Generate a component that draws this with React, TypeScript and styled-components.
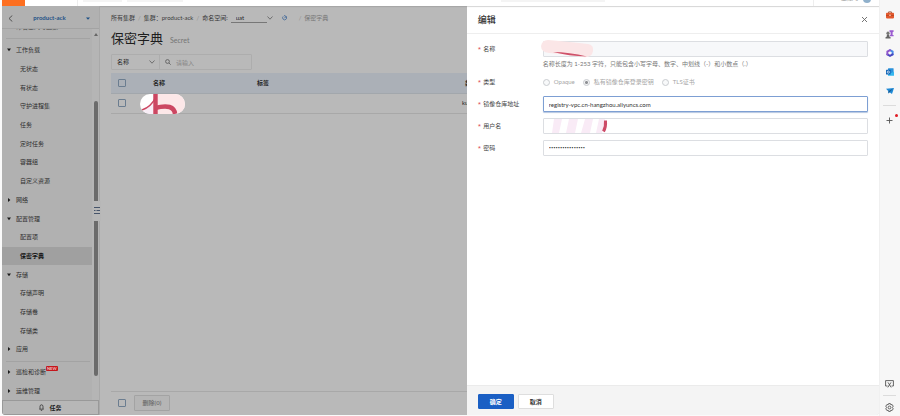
import React, { useState } from "react";
import styled, { createGlobalStyle, css } from "styled-components";

const GlobalStyle = createGlobalStyle`
  * { box-sizing: border-box; }
  html, body { margin: 0; height: 100%; }
  body {
    background: #f7f7f7;
    overflow: hidden;
    font-family: Lato, "Noto Sans CJK SC", sans-serif;
    font-size: 6px;
    line-height: 8px;
    color: #333;
  }
  #root { height: 100%; }
  button, input, select { font: inherit; color: inherit; }
`;

const Window = styled.div`
  display: flex;
  height: 100vh;
  padding-left: 2px;
  background: #fafafa;
`;

const Page = styled.div`
  position: relative;
  flex: 1;
  min-width: 0;
  display: flex;
  flex-direction: column;
  margin-bottom: 1px;
  border-radius: 0 0 4px 4px;
  overflow: hidden;
  background: #fff;
`;

/* ---------- top bar ---------- */

const TopBar = styled.header`
  flex: none;
  height: 6px;
  display: flex;
  align-items: flex-start;
  overflow: hidden;
  background: #fff;
`;

const Brand = styled.div`
  width: 23px;
  height: 6px;
  background: #fd6f20;
`;

const TopDivider = styled.div<{ $before: number }>`
  width: 1px;
  height: 6px;
  margin-left: ${(p) => p.$before}px;
  background: #eee;
`;

const TopField = styled.div<{ $width: number; $before: number }>`
  width: ${(p) => p.$width}px;
  height: 2px;
  margin-left: ${(p) => p.$before}px;
  background: #f4f4f4;
`;

const Account = styled.div`
  display: flex;
  align-items: flex-end;
  gap: 4px;
  height: 2px;
  margin: 0 8px 0 27px;
  color: #999;
`;

const Avatar = styled.span`
  width: 8px;
  height: 8px;
  margin-bottom: -1px;
  border-radius: 50%;
  background: #8fb0cb;
`;

const Spring = styled.div`
  flex: 1;
`;

/* ---------- console ---------- */

const Console = styled.div`
  position: relative;
  flex: 1;
  min-height: 0;
  display: flex;
  background: #b9b9b9;
  box-shadow: inset 0 2px 1px -1px #a6a6a6;
`;

const Sidebar = styled.aside`
  flex: none;
  width: 98px;
  display: flex;
  flex-direction: column;
  background: #b1b1b1;
  border-right: 1px solid #a9a9a9;
`;

const ClusterBar = styled.div`
  flex: none;
  height: 23px;
  display: flex;
  align-items: center;
  justify-content: space-between;
  padding: 2px 9px 0 6px;
  border-bottom: 1px solid #a3a3a3;
`;

const PlainButton = styled.button`
  display: inline-flex;
  align-items: center;
  justify-content: center;
  padding: 0;
  border: 0;
  background: none;
  cursor: pointer;
`;

const ClusterName = styled.strong`
  color: #1d5086;
  font-weight: 700;
`;

const MenuArea = styled.div`
  flex: 1;
  min-height: 0;
  display: flex;
`;

const Menu = styled.nav`
  flex: 1;
  min-width: 0;
  display: flex;
  flex-direction: column;
`;

const CutRow = styled.div`
  flex: none;
  display: flex;
  align-items: flex-end;
  height: 9px;
  overflow: hidden;
  padding: 0 0 7px 14px;
  color: #444;
`;

const MenuRule = styled.hr`
  flex: none;
  width: 84px;
  height: 1px;
  margin: 0 0 0 4px;
  border: 0;
  background: #a3a3a3;
`;

const MenuGroup = styled.div<{ $rows: number; $top: number; $end?: number }>`
  flex: ${(p) => p.$rows} 1 0;
  display: flex;
  flex-direction: column;
  padding: ${(p) => p.$top}px 0 ${(p) => p.$end ?? 0}px;
`;

const MenuItem = styled.a<{ $child?: boolean; $active?: boolean }>`
  flex: 1 1 0;
  display: flex;
  align-items: center;
  padding-left: ${(p) => (p.$child ? 18 : 5)}px;
  gap: 5px;
  color: #2c2c2c;
  text-decoration: none;
  ${(p) =>
    p.$active &&
    css`
      background: #a0a0a0;
      color: #151515;
      font-weight: 700;
    `}
`;

const NewTag = styled.span`
  align-self: flex-start;
  margin: 3px 0 0 -5px;
  padding: 0 1px;
  height: 5px;
  border-radius: 1px;
  background: #c4161c;
  color: #f1c9ca;
  font-size: 4px;
  line-height: 5px;
  font-weight: 700;
`;

const Track = styled.div`
  flex: none;
  width: 7px;
  display: flex;
  flex-direction: column;
  align-items: center;
  padding: 4px 0 24px;
  background: #b5b5b5;
`;

const Thumb = styled.div<{ $grow: number; $end: "top" | "bottom"; $before?: number }>`
  flex: ${(p) => p.$grow} 1 0;
  width: 4px;
  margin-top: ${(p) => p.$before ?? 0}px;
  border-radius: ${(p) => (p.$end === "top" ? "2px 2px 0 0" : "0 0 2px 2px")};
  background: #6b6b6b;
`;

const Collapse = styled(PlainButton)`
  width: 8px;
  height: 20px;
  margin-left: 3px;
  background: #b7b7b7;
  z-index: 1;
`;

const TaskButton = styled(PlainButton)`
  flex: none;
  height: 15px;
  gap: 5px;
  border: 1px solid #999;
  background: #b7b7b7;
  color: #222;
  font-weight: 700;
`;

/* ---------- secret list ---------- */

const Main = styled.main`
  flex: 1;
  min-width: 0;
  display: flex;
  flex-direction: column;
  padding: 7px 0 0 11px;
`;

const Crumbs = styled.nav`
  flex: none;
  display: flex;
  align-items: center;
  gap: 3px;
  height: 10px;
  white-space: nowrap;
`;

const Crumb = styled.a<{ $muted?: boolean }>`
  color: ${(p) => (p.$muted ? "#777" : "#3a3a3a")};
  text-decoration: none;
`;

const Slash = styled.span`
  color: #8d8d8d;
`;

const SelectWrap = styled.span`
  display: inline-flex;
  align-items: center;
`;

const BareSelect = styled.select<{ $width: number; $underline?: boolean }>`
  appearance: none;
  width: ${(p) => p.$width}px;
  height: ${(p) => (p.$underline ? 10 : 13)}px;
  padding: 0 0 0 5px;
  border: 0;
  border-bottom: ${(p) => (p.$underline ? "1px solid #777" : "0")};
  border-radius: 0;
  background: none;
  color: #262626;
  outline: none;
`;

const Heading = styled.div`
  flex: none;
  display: flex;
  align-items: baseline;
  gap: 7px;
  margin-top: 5px;
  height: 20px;
`;

const Title = styled.h1`
  margin: 0;
  font-size: 13px;
  line-height: 20px;
  font-weight: 400;
  color: #1d1d1d;
`;

const Subtitle = styled.span`
  font-size: 7px;
  color: #747474;
`;

const Filter = styled.div`
  flex: none;
  display: flex;
  align-items: center;
  width: 141px;
  height: 16px;
  margin-top: 6px;
  border: 1px solid #adadad;
  border-radius: 1px;
`;

const FilterKind = styled.div`
  display: flex;
  align-items: center;
  width: 48px;
  height: 14px;
  border-right: 1px solid #adadad;
`;

const SearchBox = styled.label`
  flex: 1;
  min-width: 0;
  display: flex;
  align-items: center;
  gap: 5px;
  padding-left: 5px;
`;

const SearchInput = styled.input`
  flex: 1;
  min-width: 0;
  height: 12px;
  padding: 0;
  border: 0;
  background: none;
  outline: none;
  &::placeholder { color: #868686; opacity: 1; }
`;

const Table = styled.table`
  flex: none;
  width: 100%;
  margin-top: 3px;
  border-collapse: collapse;
  table-layout: fixed;
  text-align: left;
`;

const HeadCell = styled.th<{ $width?: number; $indent?: number }>`
  width: ${(p) => (p.$width ? `${p.$width}px` : "auto")};
  height: 20px;
  padding: 0 0 0 ${(p) => p.$indent ?? 0}px;
  background: #abb0b7;
  border-bottom: 1px solid #a2a7ac;
  color: #262626;
  font-weight: 700;
`;

const Cell = styled.td`
  height: 20px;
  padding: 0;
  border-bottom: 1px solid #a8a8a8;
  line-height: 0;
  color: #222;
`;

const CheckBox = styled.input`
  appearance: none;
  display: block;
  width: 8px;
  height: 8px;
  margin: 0 0 0 7px;
  border: 1px solid #6b7d90;
  border-radius: 1px;
`;

const BulkBar = styled.div`
  flex: none;
  display: flex;
  align-items: center;
  gap: 8px;
  height: 24px;
  margin-top: auto;
  padding-bottom: 1px;
  border-top: 1px solid #a8a8a8;
`;

const DeleteButton = styled.button`
  width: 36px;
  height: 16px;
  padding: 0;
  border: 1px solid #a3a3a3;
  border-radius: 1px;
  background: #b5b5b5;
  color: #757575;
  font-weight: 700;
`;

/* ---------- edit drawer ---------- */

const Drawer = styled.section`
  position: absolute;
  top: 0;
  right: 0;
  bottom: 0;
  width: 47%;
  display: flex;
  flex-direction: column;
  background: #fff;
  box-shadow: inset 0 2px 1px -1px #d5d5d5;
`;

const DrawerHead = styled.header`
  flex: none;
  height: 28px;
  display: flex;
  align-items: center;
  justify-content: space-between;
  padding: 0 11px;
  border-bottom: 1px solid #eee;
`;

const DrawerTitle = styled.h2`
  margin: 0;
  font-size: 9px;
  line-height: 12px;
  font-weight: 500;
  color: #333;
`;

const Form = styled.form`
  flex: 1;
  display: flex;
  flex-direction: column;
  gap: 6px;
  padding: 7px 11px 0;
`;

const Field = styled.div`
  display: grid;
  grid-template-columns: 65px 1fr;
  min-height: 16px;
`;

const Label = styled.label`
  line-height: 16px;
  color: #444;
  &::before {
    content: "*";
    margin-right: 2px;
    color: #d9363e;
    font-family: "Open Sans", sans-serif;
  }
`;

const InputHolder = styled.div`
  position: relative;
`;

const TextInput = styled.input`
  display: block;
  width: 100%;
  height: 16px;
  padding: 0 5px;
  border: 1px solid #dcdee2;
  border-radius: 1px;
  background: #fff;
  color: #333;
  outline: none;
  &:disabled { background: #f7f8fa; }
  &[type="password"] { font-family: "Open Sans", sans-serif; }
  &[data-current="true"] {
    border-color: #7d9fd3;
    box-shadow: 0 1px 1px #b5c6e0;
  }
`;

const Hint = styled.p`
  margin: 2px 0 0;
  line-height: 9px;
  color: #777;
`;

const RadioRow = styled.div`
  display: flex;
  align-items: center;
  gap: 8px;
  height: 16px;
`;

const RadioLabel = styled.label`
  display: inline-flex;
  align-items: center;
  gap: 4px;
  color: #a5a5a5;
`;

const Radio = styled.input`
  appearance: none;
  width: 7px;
  height: 7px;
  margin: 0;
  border: 1px solid #c9ccd0;
  border-radius: 50%;
  background: #f8f9fa;
  &:checked {
    background: radial-gradient(circle, #8e9094 0 1px, #f3f4f5 2px);
  }
`;

const DrawerFoot = styled.footer`
  flex: none;
  display: flex;
  gap: 4px;
  height: 30px;
  padding: 8px 0 0 11px;
  border-top: 1px solid #ebebeb;
  background: #f4f4f4;
`;

const ActionButton = styled.button<{ $primary?: boolean }>`
  width: 36px;
  height: 15px;
  padding: 0;
  border: 1px solid ${(p) => (p.$primary ? "#1a5fc4" : "#dedede")};
  border-radius: 1px;
  background: ${(p) => (p.$primary ? "#1a5fc4" : "#fff")};
  color: ${(p) => (p.$primary ? "#fff" : "#333")};
  font-weight: 700;
`;

const NameMask = styled.svg`
  position: absolute;
  left: -2px;
  top: -2px;
`;

const UserMask = styled.svg`
  position: absolute;
  left: 9px;
  top: 1px;
`;

/* ---------- browser side rail ---------- */

const Rail = styled.aside`
  flex: none;
  width: 21px;
  display: flex;
  flex-direction: column;
  align-items: center;
  gap: 9px;
  padding: 10px 1px 4px 0;
  background: #f7f7f7;
  border-left: 1px solid #f0f0f0;
`;

const RailButton = styled(PlainButton)`
  position: relative;
  flex: none;
  width: 18px;
  height: 10px;
`;

const RailRule = styled.hr`
  flex: none;
  width: 13px;
  height: 1px;
  margin: 0;
  border: 0;
  background: #dcdcdc;
`;

const RailEnd = styled.div`
  display: flex;
  flex-direction: column;
  align-items: center;
  gap: 6px;
  margin-top: auto;
`;

const Dot = styled.span`
  position: absolute;
  top: -1px;
  right: 1px;
  width: 3px;
  height: 3px;
  border-radius: 50%;
  background: #e01b24;
`;

const Chevron = ({ color = "#5c5c5c" }: { color?: string }) => (
  <svg width="6" height="4" viewBox="0 0 6 4" fill="none" stroke={color} strokeWidth="0.8">
    <path d="M0.5 0.5 3 3.2 5.5 0.5" />
  </svg>
);

const Caret = ({ open }: { open?: boolean }) => (
  <svg width="4" height="4" viewBox="0 0 4 4" fill="#1c1c1c">
    <path d={open ? "M0 0.5H4L2 3.2Z" : "M1 0V4L3.4 2Z"} />
  </svg>
);

type Item = { text: string; open?: boolean; child?: boolean; active?: boolean };

const items: Item[] = [
  { text: "工作负载", open: true },
  { text: "无状态", child: true },
  { text: "有状态", child: true },
  { text: "守护进程集", child: true },
  { text: "任务", child: true },
  { text: "定时任务", child: true },
  { text: "容器组", child: true },
  { text: "自定义资源", child: true },
  { text: "网络" },
  { text: "配置管理", open: true },
  { text: "配置项", child: true },
  { text: "保密字典", child: true, active: true },
  { text: "存储", open: true },
  { text: "存储声明", child: true },
  { text: "存储卷", child: true },
  { text: "存储类", child: true },
  { text: "应用" },
];

const types = ["Opaque", "私有镜像仓库登录密钥", "TLS证书"];

function SideMenu() {
  return (
    <Sidebar>
      <ClusterBar>
        <PlainButton aria-label="返回">
          <svg width="5" height="7" viewBox="0 0 5 7" fill="none" stroke="#4b4b4b" strokeWidth="0.9">
            <path d="M4.3 0.5 1 3.5 4.3 6.5" />
          </svg>
        </PlainButton>
        <ClusterName>product-ack</ClusterName>
        <PlainButton aria-label="切换集群">
          <svg width="4" height="3" viewBox="0 0 4 3" fill="#1d5086">
            <path d="M0 0.5H4L2 2.7Z" />
          </svg>
        </PlainButton>
      </ClusterBar>
      <MenuArea>
        <Menu>
          <CutRow>命名空间与配额</CutRow>
          <MenuRule />
          <MenuGroup $rows={17} $top={2} $end={2}>
            {items.map((i) => (
              <MenuItem key={i.text} href="#" $child={i.child} $active={i.active}>
                {!i.child && <Caret open={i.open} />}
                {i.text}
              </MenuItem>
            ))}
          </MenuGroup>
          <MenuRule />
          <MenuGroup $rows={2} $top={1}>
            <MenuItem href="#">
              <Caret />
              巡检和诊断
              <NewTag>NEW</NewTag>
            </MenuItem>
            <MenuItem href="#">
              <Caret />
              运维管理
            </MenuItem>
          </MenuGroup>
        </Menu>
        <Track>
          <svg width="4" height="3" viewBox="0 0 4 3" fill="#666">
            <path d="M0 3H4L2 0Z" />
          </svg>
          <Thumb $grow={100} $end="top" $before={65} />
          <Collapse aria-label="收起菜单">
            <svg width="6" height="7" viewBox="0 0 6 7" stroke="#46546a" strokeWidth="1" fill="none">
              <path d="M0 0.5H6M2.5 3.5H6M0 6.5H6M0 3.5H1.5" />
            </svg>
          </Collapse>
          <Thumb $grow={156} $end="bottom" />
        </Track>
      </MenuArea>
      <TaskButton>
        <svg width="5" height="7" viewBox="0 0 5 7" fill="none" stroke="#222" strokeWidth="0.7">
          <path d="M0.3 5.2H4.7M1 5V2.6Q1 0.8 2.5 0.8T4 2.6V5M1.8 6.4H3.2" />
        </svg>
        任务
      </TaskButton>
    </Sidebar>
  );
}

function SecretList() {
  return (
    <Main>
      <Crumbs>
        <Crumb href="#">所有集群</Crumb>
        <Slash>/</Slash>
        <Crumb href="#">集群：product-ack</Crumb>
        <Slash>/</Slash>
        <span>命名空间:</span>
        <SelectWrap>
          <BareSelect aria-label="命名空间" $width={36} $underline>
            <option>uat</option>
          </BareSelect>
          <Chevron />
        </SelectWrap>
        <PlainButton aria-label="刷新">
          <svg width="20" height="6" viewBox="0 0 20 6" fill="none" stroke="#3d6698" strokeWidth="0.8">
            <path d="M10.2 1.6A2 2 0 1 1 7.2 1.4M8 0.4 10.4 1.6 8.4 2.8" />
          </svg>
        </PlainButton>
        <Slash>/</Slash>
        <Crumb as="span" $muted>保密字典</Crumb>
      </Crumbs>
      <Heading>
        <Title>保密字典</Title>
        <Subtitle>Secret</Subtitle>
      </Heading>
      <Filter>
        <FilterKind>
          <BareSelect aria-label="筛选字段" $width={37}>
            <option>名称</option>
          </BareSelect>
          <Chevron />
        </FilterKind>
        <SearchBox>
          <svg width="6" height="6" viewBox="0 0 6 6" fill="none" stroke="#555" strokeWidth="0.8">
            <circle cx="2.5" cy="2.5" r="1.9" />
            <path d="M4 4 5.7 5.7" />
          </svg>
          <SearchInput placeholder="请输入" aria-label="搜索" />
        </SearchBox>
      </Filter>
      <Table>
        <thead>
          <tr>
            <HeadCell $width={42}><CheckBox type="checkbox" aria-label="全选" /></HeadCell>
            <HeadCell $width={104}>名称</HeadCell>
            <HeadCell $width={205}>标签</HeadCell>
            <HeadCell $indent={3}>类型</HeadCell>
          </tr>
        </thead>
        <tbody>
          <tr>
            <Cell><CheckBox type="checkbox" aria-label="选择" /></Cell>
            <Cell>
              <Smudge />
            </Cell>
            <Cell />
            <Cell>kube</Cell>
          </tr>
        </tbody>
      </Table>
      <BulkBar>
        <CheckBox type="checkbox" aria-label="选择全部" />
        <DeleteButton disabled>删除(0)</DeleteButton>
      </BulkBar>
    </Main>
  );
}

const SmudgeSvg = styled.svg`
  display: block;
  margin: 0 0 -1px -13px;
`;

const Smudge = () => (
  <SmudgeSvg width="45" height="20" viewBox="0 0 45 20">
    <defs>
      <clipPath id="pill"><rect width="45" height="20" rx="10" /></clipPath>
    </defs>
    <g clipPath="url(#pill)">
      <rect width="45" height="20" fill="#fff" />
      <path d="M18 0H45V20H18Z" fill="#fce7e8" />
      <path d="M0 20 13 9V20Z" fill="#f8edf6" />
      <path d="M15.5 0V20" stroke="#cc4762" strokeWidth="4.5" />
      <path d="M2 16Q11 13 16 3" stroke="#cc4762" strokeWidth="1.6" fill="none" />
      <path d="M15 14Q34 9 35 20" stroke="#cc4762" strokeWidth="4.5" fill="none" />
    </g>
  </SmudgeSvg>
);

function EditDrawer() {
  const [type, setType] = useState(types[1]);
  const [registry, setRegistry] = useState("registry-vpc.cn-hangzhou.aliyuncs.com");
  return (
    <Drawer role="dialog" aria-labelledby="drawer-title">
      <DrawerHead>
        <DrawerTitle id="drawer-title">编辑</DrawerTitle>
        <PlainButton aria-label="关闭">
          <svg width="7" height="7" viewBox="0 0 7 7" stroke="#666" strokeWidth="0.9">
            <path d="M1 1 6 6M6 1 1 6" />
          </svg>
        </PlainButton>
      </DrawerHead>
      <Form>
        <Field>
          <Label htmlFor="name">名称</Label>
          <InputHolder>
            <TextInput id="name" disabled />
            <NameMask width="54" height="20" viewBox="0 0 54 20">
              <path d="M7 1Q30 3 47 5 53 6 52 12 51 19 42 18 24 15 8 14 0 13 0 7 1 1 7 1Z" fill="#fbe6e7" />
              <path d="M12 13Q28 13 46 17.5 28 17 12 13Z" fill="#cf5169" />
            </NameMask>
            <Hint>名称长度为 1-253 字符，只能包含小写字母、数字、中划线（-）和小数点（.）</Hint>
          </InputHolder>
        </Field>
        <Field role="radiogroup" aria-labelledby="type-label">
          <Label as="span" id="type-label">类型</Label>
          <RadioRow>
            {types.map((t) => (
              <RadioLabel key={t}>
                <Radio type="radio" name="type" disabled checked={type === t} onChange={() => setType(t)} />
                {t}
              </RadioLabel>
            ))}
          </RadioRow>
        </Field>
        <Field>
          <Label htmlFor="registry">镜像仓库地址</Label>
          <TextInput id="registry" data-current="true" value={registry} onChange={(e) => setRegistry(e.target.value)} />
        </Field>
        <Field>
          <Label htmlFor="user">用户名</Label>
          <InputHolder>
            <TextInput id="user" />
            <UserMask width="58" height="14" viewBox="0 0 58 14">
              <path d="M2 0H10L7 14H0Z M17 0H26L23 14H14Z M33 0H41L38 14H29Z M47 0H53L50 14H44Z" fill="#f9ebf6" />
              <path d="M53 2Q57 6 52 13Z" fill="#f6dbe3" />
              <path d="M53.5 1.5Q54 8 51.5 12.5" stroke="#cd4b68" strokeWidth="3" fill="none" />
            </UserMask>
          </InputHolder>
        </Field>
        <Field>
          <Label htmlFor="password">密码</Label>
          <TextInput id="password" type="password" defaultValue="0123456789abcdef" />
        </Field>
      </Form>
      <DrawerFoot>
        <ActionButton $primary>确定</ActionButton>
        <ActionButton>取消</ActionButton>
      </DrawerFoot>
    </Drawer>
  );
}

function SideRail() {
  return (
    <Rail>
      <RailButton aria-label="工具箱">
        <svg width="8" height="8" viewBox="0 0 8 8">
          <path d="M2.6 2V0.9H5.4V2" fill="none" stroke="#8c3a1c" strokeWidth="0.8" />
          <rect y="1.8" width="8" height="5.6" rx="0.8" fill="#e2582c" />
          <rect y="4" width="8" height="0.7" fill="#b0401f" />
          <rect x="3.3" y="3.6" width="1.4" height="1.4" fill="#f4cfbd" />
        </svg>
      </RailButton>
      <RailButton aria-label="游戏">
        <svg width="9" height="9" viewBox="0 0 9 9">
          <path d="M4.5 0.3H8.6V1.7L7.6 2.2V5H8.6V6.3H4.8V5H5.6V2.2L4.5 1.7Z" fill="#9a5bd0" />
          <circle cx="3" cy="3.2" r="1.6" fill="#777" />
          <path d="M2 4.5H4L4.5 6.8 5.6 7.2V8.5H0.5V7.2L1.6 6.8Z" fill="#666" />
        </svg>
      </RailButton>
      <RailButton aria-label="Microsoft 365">
        <svg width="8" height="8" viewBox="0 0 8 8" fill="none" strokeWidth="2" strokeLinecap="round">
          <path d="M4 1.2 6.6 2.6V5.4" stroke="#4a8be8" />
          <path d="M6.6 5.4 4 6.8 1.4 5.4" stroke="#4a48c0" />
          <path d="M1.4 5.4V2.6L4 1.2" stroke="#8f56cc" />
        </svg>
      </RailButton>
      <RailButton aria-label="Outlook">
        <svg width="8" height="8" viewBox="0 0 8 8">
          <rect x="2" y="0.3" width="5.6" height="5" rx="0.5" fill="#2a93dc" />
          <path d="M2 3.6 5 5.2 8 3.4V7.7H2Z" fill="#35b8f0" />
          <rect y="1.8" width="4.6" height="4.6" rx="0.5" fill="#0f62b4" />
          <circle cx="2.3" cy="4.1" r="1.1" fill="none" stroke="#fff" strokeWidth="0.7" />
        </svg>
      </RailButton>
      <RailButton aria-label="发送">
        <svg width="8" height="8" viewBox="0 0 8 8">
          <path d="M0 1.8 8 1 6 7 3.6 5.2 2.4 6.6V4.2Z" fill="#1f8ad6" />
          <path d="M2.4 4.2 7 1.6 3.6 5.2 2.4 6.6Z" fill="#155a94" />
        </svg>
      </RailButton>
      <RailRule />
      <RailButton aria-label="添加">
        <svg width="7" height="7" viewBox="0 0 7 7" stroke="#555" strokeWidth="0.9">
          <path d="M3.5 0.5V6.5M0.5 3.5H6.5" />
        </svg>
        <Dot />
      </RailButton>
      <RailEnd>
        <RailButton aria-label="截图">
          <svg width="9" height="8" viewBox="0 0 9 8" fill="none" stroke="#555" strokeWidth="0.9">
            <path d="M2.5 6H0.6V0.6H8.4V6H6.5M3 2.4 6.2 7.4M6 2.4 2.8 7.4" />
          </svg>
        </RailButton>
        <RailRule />
        <RailButton aria-label="设置">
          <svg width="9" height="9" viewBox="0 0 9 9" fill="none" stroke="#555" strokeWidth="0.9">
            <path d="M3.6 0.6H5.4L5.8 1.8 7.1 1.5 8.2 3.2 7.4 4.5 8.2 5.8 7.1 7.5 5.8 7.2 5.4 8.4H3.6L3.2 7.2 1.9 7.5 0.8 5.8 1.6 4.5 0.8 3.2 1.9 1.5 3.2 1.8Z" />
            <circle cx="4.5" cy="4.5" r="1.4" />
          </svg>
        </RailButton>
      </RailEnd>
    </Rail>
  );
}

export default function App() {
  return (
    <>
      <GlobalStyle />
      <Window>
        <Page>
          <TopBar>
            <Brand />
            <TopDivider $before={52} />
            <TopField $before={5} $width={39} />
            <TopField $before={5} $width={56} />
            <TopField $before={318} $width={104} />
            <Spring />
            <TopDivider $before={0} />
            <Account>
              主账号
              <Avatar />
            </Account>
          </TopBar>
          <Console>
            <SideMenu />
            <SecretList />
            <EditDrawer />
          </Console>
        </Page>
        <SideRail />
      </Window>
    </>
  );
}
